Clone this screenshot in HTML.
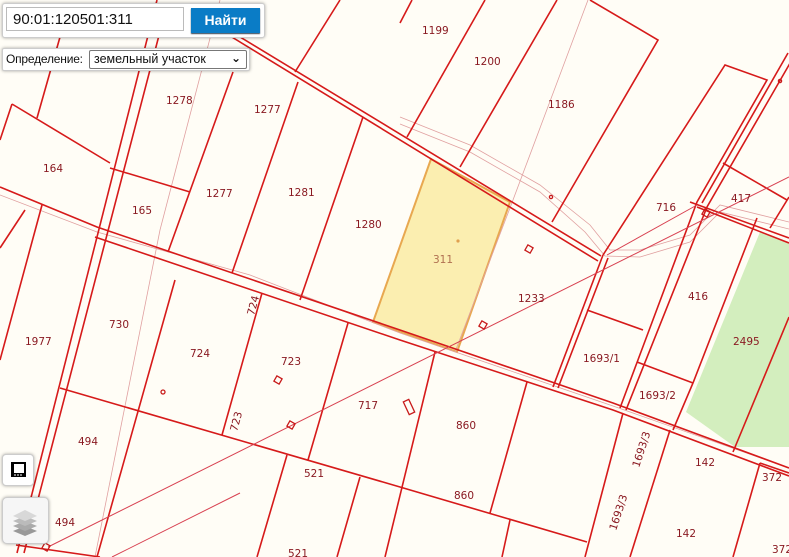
<!DOCTYPE html>
<html><head><meta charset="utf-8">
<style>
html,body{margin:0;padding:0;width:789px;height:557px;overflow:hidden;background:#fffdf6;font-family:"Liberation Sans","DejaVu Sans",sans-serif}
svg{position:absolute;left:0;top:0}
.t{font-family:"DejaVu Sans","Liberation Sans",sans-serif;font-size:10.5px;fill:#8a1a22}
.p{position:absolute;background:#fff;border:1px solid #ccc;border-radius:3px;box-shadow:0 0 3px rgba(0,0,0,.35)}
</style></head><body>
<svg width="789" height="557" viewBox="0 0 789 557">
<polygon points="760,232 789,242 789,447 735,447 686,412" fill="#d3eebe"/>
<polygon points="431,159 510,202 457,352 373,322" fill="#fbeeb0" stroke="#e8a850" stroke-width="2"/>
<g fill="none" stroke="#e0a0a0" stroke-width="0.8">
<path d="M400,117 L470,145 L540,185 L590,225 L610,250 L640,250 L690,235 L720,205 L789,222"/>
<path d="M400,124 L470,152 L540,192 L585,232 L605,256 L640,257 L690,242 L720,212 L789,229"/>
<path d="M0,195 L97,232 L250,275 L400,333 L613,406 L789,468"/>
<path d="M220,0 L160,230 L95,557"/>
<path d="M513,200 L588,0"/>
<path d="M513,200 L455,352"/>
</g>
<g fill="none" stroke="#d61a1a" stroke-width="1.6">
<path d="M222,26 L601,256"/><path d="M222,31 L598,261"/>
<path d="M690,202 L789,238"/><path d="M697,207 L789,243"/>
<path d="M340,0 L295,72"/>
<path d="M412,0 L400,23"/>
<path d="M485,0 L407,137"/>
<path d="M557,0 L460,167"/>
<path d="M590,0 L658,40 L552,222"/>
<path d="M603,255 L725,65 L767,80 L697,202 L620,408"/>
<path d="M788,53 L702,203"/><path d="M793,58 L707,207 L626,410"/>
<path d="M723,163 L787,200"/><path d="M770,228 L789,197"/>
<path d="M603,255 L553,387"/><path d="M608,258 L558,388"/>
<path d="M62,30 L37,118"/>
<path d="M12,104 L0,140"/>
<path d="M12,104 L110,163"/>
<path d="M157,0 L17,553"/><path d="M163,20 L24,553"/>
<path d="M0,187 L97,227 L400,330 L613,403 L789,468"/>
<path d="M95,237 L400,340 L613,410 L789,476"/>
<path d="M110,168 L190,192"/>
<path d="M233,72 L168,252"/>
<path d="M298,82 L232,273"/>
<path d="M363,117 L300,300"/>
<path d="M42,205 L0,360"/>
<path d="M25,210 L0,248"/>
<path d="M60,388 L400,487 L587,542"/>
<path d="M175,280 L97,557"/>
<path d="M262,293 L222,435"/>
<path d="M348,323 L308,460"/>
<path d="M287,455 L257,557"/>
<path d="M360,477 L337,557"/>
<path d="M435,352 L385,557"/>
<path d="M527,382 L490,513"/>
<path d="M510,520 L502,557"/>
<path d="M623,413 L585,557"/>
<path d="M670,430 L630,557"/>
<path d="M587,310 L643,330"/>
<path d="M637,362 L693,383"/>
<path d="M757,218 L693,383 L673,430"/>
<path d="M789,317 L733,452"/>
<path d="M760,463 L733,557"/>
<path d="M760,463 L789,473"/>
<path d="M16,545 L100,557"/>
</g>
<g fill="none" stroke="#d84050" stroke-width="1">
<path d="M48,547 L789,177"/>
<path d="M112,557 L240,493"/>
<path d="M607,255 L697,205"/>
</g>
<g fill="none" stroke="#c81a1a" stroke-width="1.3">
<rect x="526" y="246" width="6" height="6" transform="rotate(30 529 249)"/>
<rect x="480" y="322" width="6" height="6" transform="rotate(30 483 325)"/>
<rect x="275" y="377" width="6" height="6" transform="rotate(30 278 380)"/>
<rect x="288" y="422" width="6" height="6" transform="rotate(30 291 425)"/>
<rect x="43" y="544" width="6" height="6" transform="rotate(30 46 547)"/>
<rect x="703" y="210" width="6" height="6" transform="rotate(30 706 213)"/>
<rect x="406" y="400" width="6" height="14" transform="rotate(-25 409 407)"/>
<circle cx="163" cy="392" r="2"/><circle cx="551" cy="197" r="1.6"/><circle cx="780" cy="81" r="1.6"/>
</g>
<circle cx="458" cy="241" r="1.6" fill="#e0a050"/>
<g class="t">
<text x="422" y="34">1199</text><text x="474" y="65">1200</text><text x="548" y="108">1186</text>
<text x="166" y="104">1278</text><text x="254" y="113">1277</text><text x="43" y="172">164</text>
<text x="132" y="214">165</text><text x="206" y="197">1277</text><text x="288" y="196">1281</text>
<text x="355" y="228">1280</text><text x="433" y="263" style="fill:#b07050">311</text>
<text x="656" y="211">716</text><text x="731" y="202">417</text><text x="518" y="302">1233</text>
<text x="688" y="300">416</text><text x="733" y="345">2495</text><text x="583" y="362">1693/1</text>
<text x="639" y="399">1693/2</text><text x="109" y="328">730</text><text x="25" y="345">1977</text>
<text x="190" y="357">724</text><text x="281" y="365">723</text><text x="358" y="409">717</text>
<text x="456" y="429">860</text><text x="78" y="445">494</text><text x="304" y="477">521</text>
<text x="454" y="499">860</text><text x="695" y="466">142</text><text x="762" y="481">372</text>
<text x="55" y="526">494</text><text x="676" y="537">142</text><text x="772" y="553">372</text>
<text x="288" y="557">521</text>
<text transform="translate(254,316) rotate(-75)">724</text>
<text transform="translate(237,432) rotate(-75)">723</text>
<text transform="translate(639,468) rotate(-72)">1693/3</text>
<text transform="translate(616,531) rotate(-72)">1693/3</text>
</g>
</svg>
<div class="p" style="left:2px;top:3px;width:261px;height:33px"></div>
<div style="position:absolute;left:6px;top:7px;height:24px;border:1px solid #bbb;background:#fff;font-size:15px;line-height:24px;padding-left:6px;box-sizing:border-box;width:178px;color:#111">90:01:120501:311</div>
<div style="position:absolute;left:191px;top:8px;width:69px;height:25px;background:#0a7cc6;color:#fff;font-size:14px;font-weight:bold;text-align:center;line-height:25px;box-shadow:0 1px 1px #345">Найти</div>
<div class="p" style="left:2px;top:48px;width:246px;height:21px;border-radius:2px"></div>
<div style="position:absolute;left:6px;top:52px;font-size:12px;color:#111;letter-spacing:-0.2px">Определение:</div>
<div style="position:absolute;left:89px;top:50px;width:158px;height:19px;border:1px solid #777;border-radius:2px;background:#fff;box-sizing:border-box;font-size:12.5px;line-height:17px;padding-left:4px;color:#111">земельный участок<span style="position:absolute;right:5px;top:-1px;font-size:12px;font-weight:bold">&#8964;</span></div>
<div class="p" style="left:2px;top:454px;width:30px;height:30px;border-radius:4px">
<svg width="30" height="30"><rect x="9" y="8" width="13" height="13" fill="#fff" stroke="#000" stroke-width="2"/><rect x="8" y="18" width="15" height="4" fill="#000"/><rect x="8" y="7" width="3" height="15" fill="#000"/><path d="M12,21v-2M15,21v-2M18,21v-2" stroke="#fff" stroke-width="1"/></svg></div>
<div class="p" style="left:2px;top:497px;width:45px;height:45px;border-radius:5px;background:#f6f6f6">
<svg width="45" height="45"><polygon points="22,28 34,33 22,38 10,33" fill="#999"/><polygon points="22,23 34,28 22,33 10,28" fill="#aaa"/><polygon points="22,18 34,23 22,28 10,23" fill="#bbb"/><polygon points="22,12 34,18 22,23 10,18" fill="#d8d8d8"/></svg></div>
</body></html>
